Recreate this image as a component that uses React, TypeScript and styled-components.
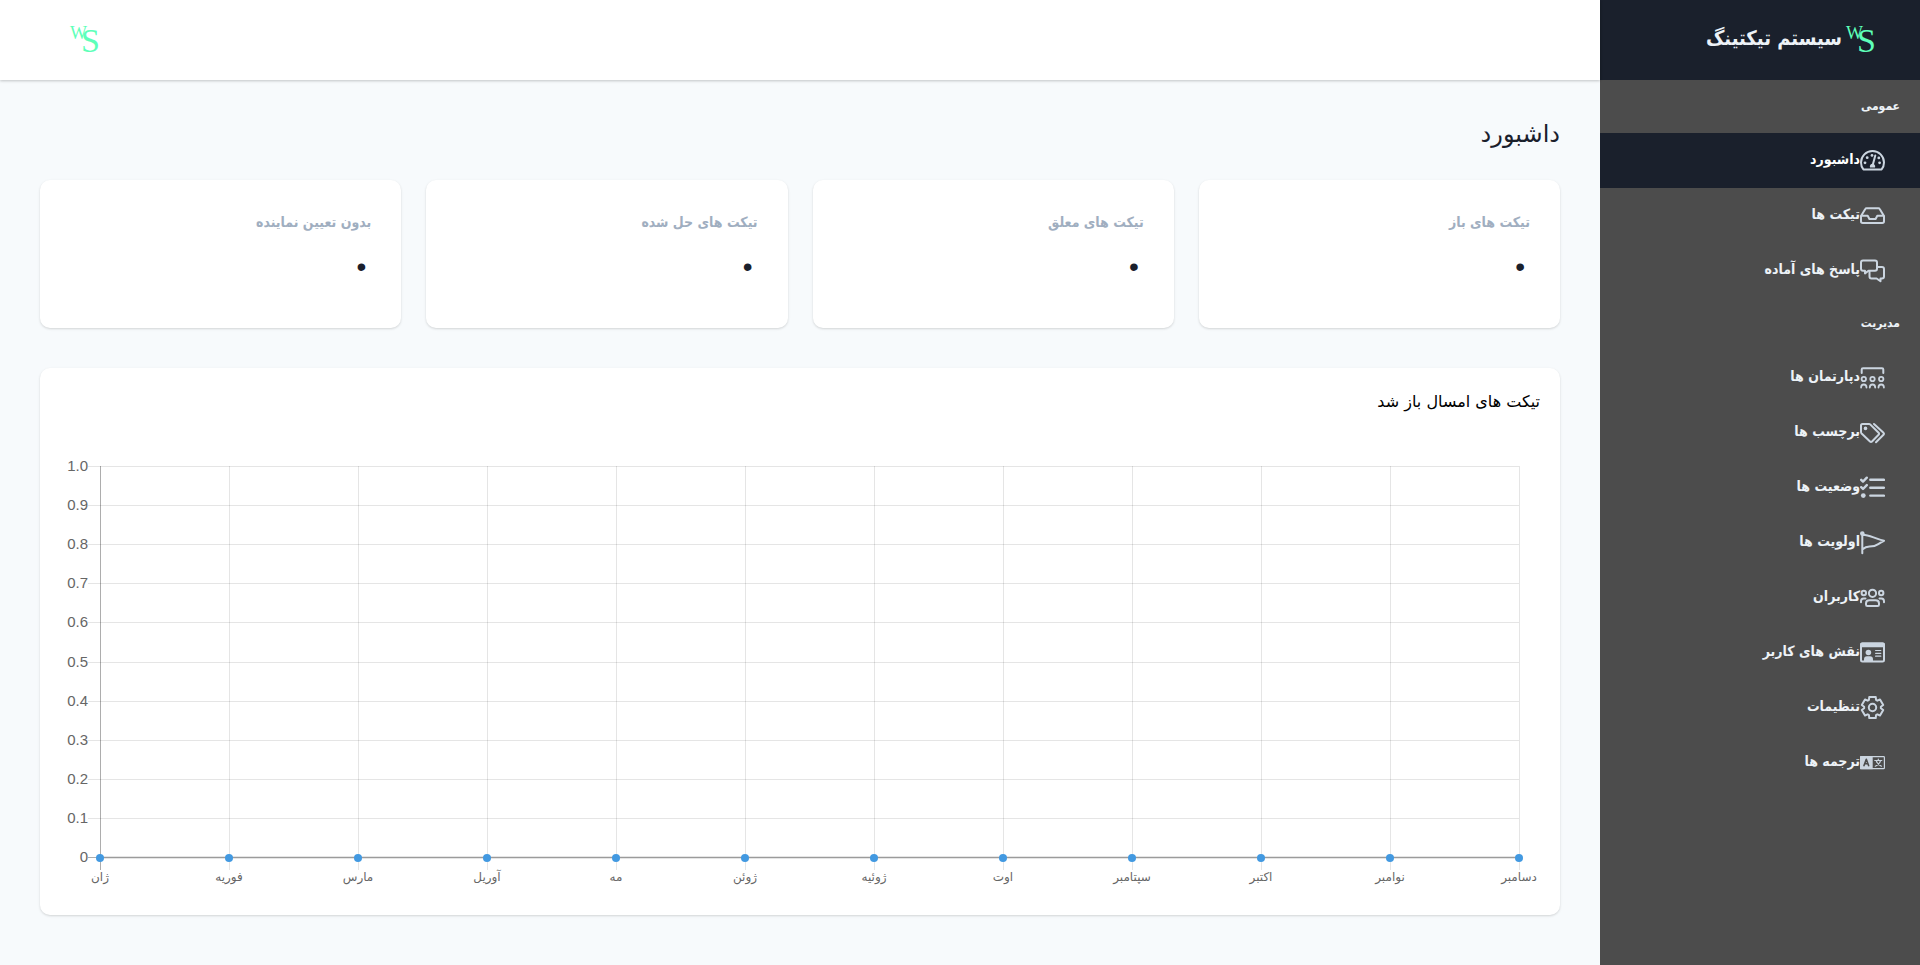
import React from "react";
import styled, { createGlobalStyle } from "styled-components";

const colors = {
  ink: "#1a202c",
  sidebar: "#4c4c4c",
  page: "#f7fafc",
  icon: "#cbd5e0",
  navText: "#edf2f7",
  muted: "#a0aec0",
  point: "#4299e1",
  mint: "#5effb9",
};

const condensed = `"DejaVu Sans Condensed", "DejaVu Sans", sans-serif`;

const GlobalStyle = createGlobalStyle`
  *, *::before, *::after { box-sizing: border-box; }
  body {
    margin: 0;
    background: ${colors.page};
    color: ${colors.ink};
    font-family: "DejaVu Sans", sans-serif;
    font-size: 14px;
  }
  h1, h2, h3, p, ul { margin: 0; padding: 0; font-weight: normal; }
`;

const Shell = styled.div`
  display: flex;
  min-height: 100vh;
`;

const Sidebar = styled.aside`
  flex: 0 0 320px;
  background: ${colors.sidebar};
  font-family: ${condensed};
`;

const Brand = styled.a`
  display: flex;
  align-items: center;
  height: 80px;
  padding: 0 44px;
  gap: 4px;
  background: ${colors.ink};
  color: ${colors.navText};
  font-size: 20px;
  font-weight: bold;
  text-decoration: none;
`;

const BrandName = styled.span`
  line-height: 32px;
  padding-bottom: 4px;
`;

const Nav = styled.nav`
  padding-top: 1px;
`;

const NavHeading = styled.h2`
  height: 52px;
  padding: 0 20px;
  color: ${colors.navText};
  font-size: 12px;
  font-weight: bold;
  line-height: 50px;
`;

const NavList = styled.ul`
  list-style: none;
`;

const NavLink = styled.a<{ $active?: boolean }>`
  display: flex;
  align-items: center;
  height: 55px;
  padding: 0 35px;
  background: ${(p) => (p.$active ? colors.ink : "transparent")};
  color: ${(p) => (p.$active ? "#fff" : colors.navText)};
  font-size: 14px;
  font-weight: bold;
  text-decoration: none;
`;

const NavText = styled.span`
  line-height: 24px;
  padding-bottom: 4px;
`;

const IconSvg = styled.svg`
  flex: none;
  width: 25px;
  height: 25px;
  fill: none;
  stroke: ${colors.icon};
  stroke-width: 2;
  stroke-linecap: round;
  stroke-linejoin: round;
  .solid { fill: ${colors.icon}; stroke: none; }
`;

const Content = styled.div`
  flex: 1;
  min-width: 0;
`;

const TopBar = styled.header`
  display: flex;
  align-items: center;
  justify-content: flex-end;
  height: 80px;
  padding: 0 70px;
  background: #fff;
  box-shadow: 0 1px 3px rgba(0, 0, 0, 0.15), 0 1px 2px rgba(0, 0, 0, 0.08);
`;

const LogoSvg = styled.svg`
  flex: none;
  display: block;
  width: 30px;
  height: 30px;
  overflow: visible;
  direction: ltr;
  fill: ${colors.mint};
  font-family: "Liberation Serif", serif;
  font-weight: normal;
`;

const Main = styled.main`
  padding: 34px 40px 50px;
`;

const PageTitle = styled.h1`
  height: 66px;
  font-size: 24px;
  line-height: 40px;
`;

const Stats = styled.section`
  display: grid;
  grid-template-columns: repeat(4, 1fr);
  gap: 25px;
`;

const Card = styled.article`
  background: #fff;
  border-radius: 10px;
  box-shadow: 0 1px 3px rgba(0, 0, 0, 0.1), 0 1px 2px rgba(0, 0, 0, 0.06);
`;

const StatCard = styled(Card)`
  height: 148px;
  padding: 30px;
`;

const StatLabel = styled.h3`
  color: ${colors.muted};
  font-family: ${condensed};
  font-size: 14px;
  font-weight: bold;
  line-height: 24px;
`;

const StatValue = styled.p`
  padding: 10px 5px 0;
  font-family: "Liberation Sans", sans-serif;
  font-size: 28px;
  line-height: 46px;
`;

const ChartCard = styled(Card)`
  height: 547px;
  margin-top: 40px;
  padding: 20px 0;
`;

const ChartTitle = styled.h2`
  padding: 0 20px;
  margin-bottom: 50px;
  color: #000;
  font-size: 16px;
  line-height: 28px;
`;

const Plot = styled.svg`
  display: block;
  width: calc(100% - 101px);
  height: 430px;
  margin: 0 41px 0 60px;
  overflow: visible;
  direction: ltr;
  fill: #666;
  font-family: "Liberation Sans", "DejaVu Sans", sans-serif;
  font-size: 15px;
  .grid { fill: rgba(0, 0, 0, 0.1); }
  .axis { fill: rgba(0, 0, 0, 0.32); }
  .point { fill: ${colors.point}; }
  .month { font-size: 12px; }
`;

const Logo = () => (
  <LogoSvg viewBox="0 0 30 30" role="img" aria-label="WS">
    <text x="0" y="14" fontSize="18">W</text>
    <text x="11" y="27" fontSize="34">S</text>
  </LogoSvg>
);

const gearPoints = Array.from({ length: 6 }, (_, i) =>
  [[-25, 8.4], [-17, 11], [17, 11], [25, 8.4]].map(([offset, r]) => {
    const a = ((i * 60 + offset) * Math.PI) / 180;
    return `${(12.5 + r * Math.sin(a)).toFixed(2)},${(12.5 - r * Math.cos(a)).toFixed(2)}`;
  }).join(" ")
).join(" ");

const icons: Record<string, React.ReactNode> = {
  gauge: (
    <>
      <path d="M3.4 21.4C1.8 19.4 1 17 1 14.5a11.5 11.5 0 0 1 23 0c0 2.500-.8 4.900-2.400 6.900z" />
      <path d="M15.300 7.500 13 16" />
      <g className="solid">
        <path d="M10 19.500a2.700 2.700 0 1 1 5 0z" />
        <circle cx="5" cy="14.800" r="1.400" />
        <circle cx="7.200" cy="9.700" r="1.400" />
        <circle cx="12" cy="7.400" r="1.400" />
        <circle cx="18.800" cy="9.900" r="1.400" />
        <circle cx="19.600" cy="14.800" r="1.400" />
      </g>
    </>
  ),
  inbox: (
    <path d="M1 13 5.300 5.900Q5.700 5.200 6.500 5.200H18.500Q19.300 5.200 19.700 5.900L24 13V18.300Q24 20 22.300 20H2.700Q1 20 1 18.300ZM1 12.800H7.700L9.400 16H15.600L17.300 12.800H24" />
  ),
  comments: (
    <>
      <path d="M3 2.400H15Q17 2.400 17 4.400V10.800Q17 12.800 15 12.800H8.500L5 15.400V12.800H3Q1 12.800 1 10.800V4.400Q1 2.400 3 2.400Z" />
      <path d="M17.500 9H22Q24 9 24 11V18.500Q24 20.500 22 20.500H20.500V23.200L16.600 20.500H11.500Q9.500 20.500 9.500 18.500V13.500" />
    </>
  ),
  classroom: (
    <>
      <path d="M1.700 8V4.500Q1.700 3.200 3 3.200H22Q23.300 3.200 23.300 4.500V8" />
      {[3.8, 12.5, 21.2].map((x) => (
        <g key={x} strokeWidth="1.800">
          <circle cx={x} cy="14" r="2.200" />
          <path d={`M${x - 2.7} 22.500a2.700 3 0 0 1 5.400 0`} />
        </g>
      ))}
    </>
  ),
  tags: (
    <>
      <path d="M2.500 4H9Q9.800 4 10.400 4.600L18.600 12.800Q19.600 13.800 18.600 14.800L12 21.500Q11 22.500 10 21.500L1.600 13.500Q1 12.800 1 12V5.500Q1 4 2.500 4Z" />
      <path d="M14 4 23.500 12.800Q24.400 13.800 23.500 14.800L16 22.300" />
      <circle className="solid" cx="5.500" cy="8.400" r="1.800" />
    </>
  ),
  tasks: (
    <>
      <path strokeWidth="2.400" d="M10.300 4.800H23.900M10.300 12.700H23.900M10.300 20.600H23.900M1.200 4.800 3 6.600 6.800 2.700M1.200 12.200 3 14 6.800 10.100" />
      <circle className="solid" cx="3.300" cy="20.600" r="2.400" />
    </>
  ),
  flag: (
    <>
      <path d="M2.300 4V23.200M2.300 4.800C9 4.500 14 8.500 24 10.800C16 14.500 18 16.500 9.500 16.500C6 16.500 4.500 17.500 2.300 19.500" />
      <circle className="solid" cx="2.300" cy="3.500" r="2.300" />
    </>
  ),
  users: (
    <>
      <circle cx="12.500" cy="8.300" r="3.600" />
      <circle cx="3.800" cy="8" r="2.200" />
      <circle cx="21.200" cy="8" r="2.200" />
      <path d="M9.500 15.300H15.500Q19 15.300 19 18.500V19.500Q19 21 17.600 21H7.400Q6 21 6 19.500V18.500Q6 15.300 9.500 15.300ZM1 17.200V16.300Q1 13.700 3.600 13.500H5.500M24 17.200V16.300Q24 13.700 21.400 13.500H19.500" />
    </>
  ),
  idCard: (
    <>
      <rect x="1" y="3.400" width="23" height="18" rx="1.500" />
      <g className="solid">
        <path d="M0 7.300V4.500Q0 2.500 2 2.500H23Q25 2.500 25 4.500V7.300Z" />
        <circle cx="8.400" cy="12.500" r="2.800" />
        <path d="M4 21V19.500Q4 16.200 7 16.200H10Q13 16.200 13 19.500V21Z" />
      </g>
      <path strokeWidth="1.200" d="M15.600 10.500H20.800M15.600 13.300H20.800M15.600 16.200H20.800" />
    </>
  ),
  gear: (
    <>
      <polygon points={gearPoints} />
      <circle cx="12.500" cy="12.500" r="3.700" />
    </>
  ),
  language: (
    <>
      <rect x="0.600" y="6.700" width="23.800" height="12" rx="0.800" strokeWidth="1.200" />
      <path className="solid" d="M0 6.200H12.700V19.200H0Z" />
      <path stroke={colors.sidebar} strokeWidth="1.600" d="M4 15.600 6.300 9.300 8.600 15.600M5 13.800H7.600" />
      <path strokeWidth="1.200" d="M14.800 10.500H21.800M18.300 9V10.500M20.500 10.700Q19.500 14.500 15.300 16.200M16.300 10.700Q17.500 14.500 21.500 16.200" />
    </>
  ),
};

const general = [
  { icon: "gauge", text: "داشبورد", active: true },
  { icon: "inbox", text: "تیکت ها" },
  { icon: "comments", text: "پاسخ های آماده" },
];

const management = [
  { icon: "classroom", text: "دپارتمان ها" },
  { icon: "tags", text: "برچسب ها" },
  { icon: "tasks", text: "وضعیت ها" },
  { icon: "flag", text: "اولویت ها" },
  { icon: "users", text: "کاربران" },
  { icon: "idCard", text: "نقش های کاربر" },
  { icon: "gear", text: "تنظیمات" },
  { icon: "language", text: "ترجمه ها" },
];

const stats = ["تیکت های باز", "تیکت های معلق", "تیکت های حل شده", "بدون تعیین نماینده"];

const months = [
  "ژان", "فوریه", "مارس", "آوریل", "مه", "ژوئن",
  "ژوئیه", "اوت", "سپتامبر", "اکتبر", "نوامبر", "دسامبر",
];

const ticks = ["1.0", "0.9", "0.8", "0.7", "0.6", "0.5", "0.4", "0.3", "0.2", "0.1", "0"];

const PLOT_HEIGHT = 391;

type Item = { icon: string; text: string; active?: boolean };

const NavGroup = ({ title, items }: { title: string; items: Item[] }) => (
  <section>
    <NavHeading>{title}</NavHeading>
    <NavList>
      {items.map((item) => (
        <li key={item.icon}>
          <NavLink href="#" $active={item.active} aria-current={item.active ? "page" : undefined}>
            <IconSvg viewBox="0 0 25 25" aria-hidden="true">{icons[item.icon]}</IconSvg>
            <NavText>{item.text}</NavText>
          </NavLink>
        </li>
      ))}
    </NavList>
  </section>
);

const TicketChart = () => (
  <Plot role="img" aria-label="تیکت های امسال باز شد">
    {ticks.map((label, i) => {
      const y = Math.round((i * PLOT_HEIGHT) / 10);
      const last = i === ticks.length - 1;
      return (
        <g key={label}>
          <rect className={last ? "axis" : "grid"} x="-12" y={y} width="12" height="1" />
          <rect className={last ? "axis" : "grid"} x="0" y={y} width="100%" height="1" />
          <text x="-12" y={y + 5} textAnchor="end">{label}</text>
        </g>
      );
    })}
    {months.map((month, i) => {
      const x = `${(i * 100) / 11}%`;
      return (
        <g key={month}>
          <rect className={i === 0 ? "axis" : "grid"} x={x} y="0" width="1" height={PLOT_HEIGHT + 13} />
          <text className="month" x={x} y={PLOT_HEIGHT + 24} textAnchor="middle">{month}</text>
        </g>
      );
    })}
    <rect className="grid" x="0" y={PLOT_HEIGHT - 1} width="100%" height="3" />
    {months.map((month, i) => (
      <circle key={month} className="point" cx={`${(i * 100) / 11}%`} cy={PLOT_HEIGHT + 1} r="4" />
    ))}
  </Plot>
);

export default function App() {
  return (
    <Shell dir="rtl" lang="fa">
      <GlobalStyle />
      <Sidebar>
        <Brand href="#">
          <Logo />
          <BrandName>سیستم تیکتینگ</BrandName>
        </Brand>
        <Nav>
          <NavGroup title="عمومی" items={general} />
          <NavGroup title="مدیریت" items={management} />
        </Nav>
      </Sidebar>
      <Content>
        <TopBar>
          <Logo />
        </TopBar>
        <Main>
          <PageTitle>داشبورد</PageTitle>
          <Stats>
            {stats.map((label) => (
              <StatCard key={label}>
                <StatLabel>{label}</StatLabel>
                <StatValue>•</StatValue>
              </StatCard>
            ))}
          </Stats>
          <ChartCard>
            <ChartTitle>تیکت های امسال باز شد</ChartTitle>
            <TicketChart />
          </ChartCard>
        </Main>
      </Content>
    </Shell>
  );
}
